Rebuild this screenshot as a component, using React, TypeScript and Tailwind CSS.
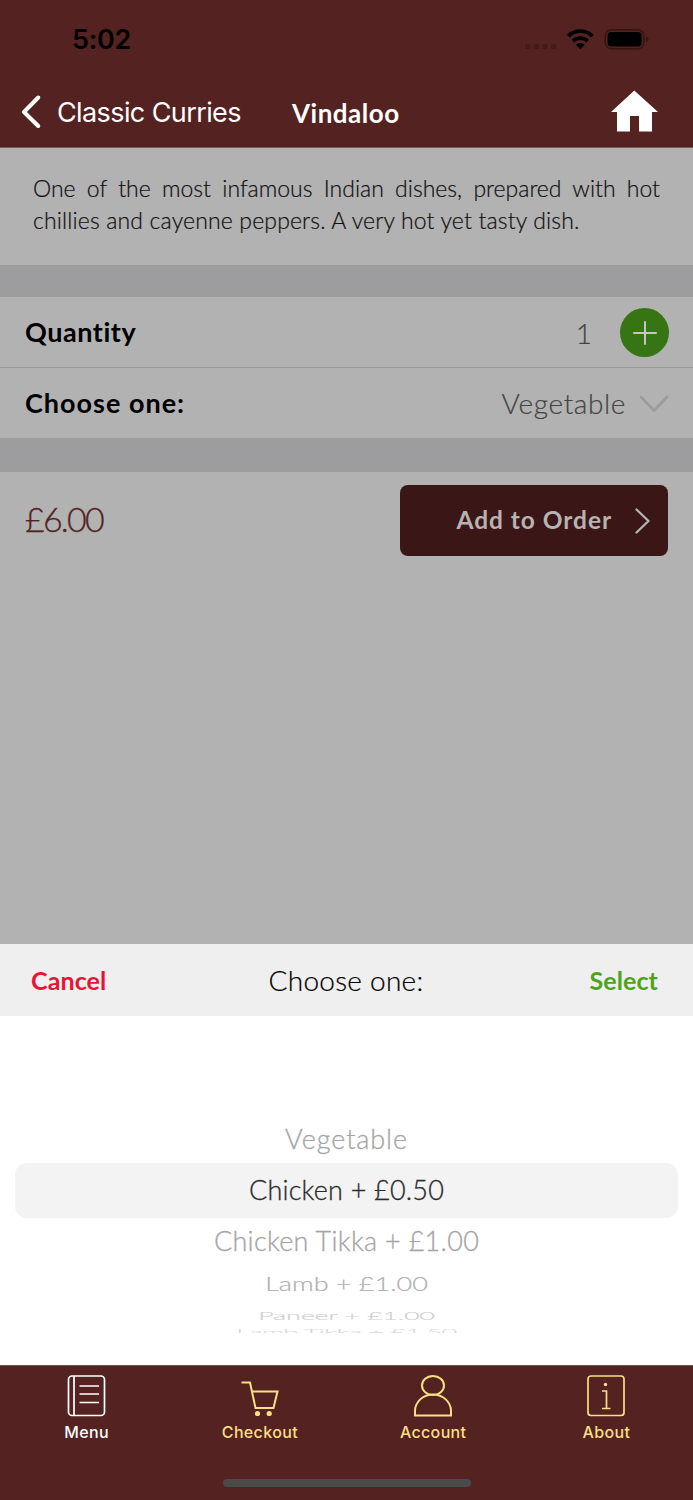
import React from 'react';

function StatusBar() {
  return (
    <div className="flex h-[76px] items-start justify-between pl-[72px] pr-[44px]">
      <span className="mt-[23px] font-[Inter] text-[27px] font-semibold leading-[34px] tracking-[-0.3px] text-black">5:02</span>
      <svg className="mt-[26px]" width="125" height="28" viewBox="524 26 125 28">
        <g fill="#431a1a">
          <rect x="525" y="44" width="5.4" height="5" rx="1.6" />
          <rect x="533.7" y="44" width="5.4" height="5" rx="1.6" />
          <rect x="542.3" y="44" width="5.4" height="5" rx="1.6" />
          <rect x="551" y="44" width="5.4" height="5" rx="1.6" />
        </g>
        <g fill="none" stroke="#000" strokeWidth="3.8">
          <path d="M568.2 36.1a17.2 17.2 0 0 1 24.2 0" />
          <path d="M572.9 41.1a10.6 10.6 0 0 1 14.8 0" />
        </g>
        <path d="M575.9 44.800a6.4 6.4 0 0 1 8.8 0l-4.4 4.4z" fill="#000" />
        <rect x="605.3" y="29.8" width="38.6" height="19" rx="6" fill="none" stroke="#37130f" strokeWidth="1.4" />
        <rect x="607.6" y="32" width="34" height="14.6" rx="3.6" fill="#000" />
        <path d="M646.2 36.6c3 1 3 4.600 0 5.600z" fill="#37130f" />
      </svg>
    </div>
  );
}

function NavBar() {
  return (
    <div className="flex h-[71px] items-center pl-[21px] pr-[35px]">
      <svg width="20" height="34" viewBox="0 0 20 34" fill="none" stroke="#fff" strokeWidth="4" strokeLinecap="round" strokeLinejoin="round">
        <path d="M17.200 2.500L3 17l14.200 14" />
      </svg>
      <span className="ml-[16px] w-[235px] whitespace-nowrap pt-[3px] font-[Inter] text-[27px] tracking-[-0.6px] text-white">Classic Curries</span>
      <span className="pt-[3px] text-[26px] font-bold tracking-[0.5px] text-white">Vindaloo</span>
      <svg className="mb-[2px] ml-auto" width="48" height="42" viewBox="0 0 48 42" fill="#fff">
        <path d="M24.300 0.500L48 22h-6v19.500H29V26h-9v15.500H7V22H1z" />
      </svg>
    </div>
  );
}

function TabItem({ label, color, children }: { label: string; color: string; children: React.ReactNode }) {
  return (
    <div className={`flex flex-1 flex-col items-center ${color}`}>
      <svg width="44" height="44" viewBox="0 0 44 44" fill="none" stroke="currentColor" strokeWidth="1.7">
        {children}
      </svg>
      <span className="mt-[4px] font-[Inter] text-[16px] font-medium leading-[20px] tracking-[0.35px]">{label}</span>
    </div>
  );
}

function TabBar() {
  return (
    <nav className="flex h-[135px] flex-col items-center border-t border-[#75514c] bg-[#532221]">
      <div className="flex h-[107px] w-full pt-[8px]">
        <TabItem label="Menu" color="text-white">
          <rect x="3.500" y="2" width="36" height="39.500" rx="3.500" />
          <path d="M9 2v39.500M14.500 12h19.500M14.500 20h19.500M14.500 28.500h19.500" />
        </TabItem>
        <TabItem label="Checkout" color="text-[#fbdf85]">
          <path d="M3.500 8.500h8.500L17.500 34h18l4-16.500H14" strokeWidth="2" />
          <circle cx="19.500" cy="39.500" r="2.600" fill="currentColor" stroke="none" />
          <circle cx="31.200" cy="39.500" r="2.600" fill="currentColor" stroke="none" />
        </TabItem>
        <TabItem label="Account" color="text-[#fbdf85]">
          <ellipse cx="22" cy="11.500" rx="11" ry="9.500" strokeWidth="2" />
          <path d="M4 41.500V37C4 28 12 20.500 22 20.500S40 28 40 37v4.500z" strokeWidth="2" />
        </TabItem>
        <TabItem label="About" color="text-[#fbdf85]">
          <rect x="4" y="2" width="36" height="39.500" rx="3" />
          <path d="M18 17h4.500v17.500M18 34.500h8.500" />
          <circle cx="21.500" cy="10.500" r="1.700" fill="currentColor" stroke="none" />
        </TabItem>
      </div>
      <div className="mt-[6px] h-[8px] w-[248px] rounded-full bg-[#4a4a4a]" />
    </nav>
  );
}

function Picker() {
  return (
    <section className="flex h-[421px] flex-col bg-white">
      <div className="grid h-[72px] grid-cols-3 items-center bg-[#efefef] pl-[31px] pr-[35px] text-[25px]">
        <span className="pt-[2px] font-bold tracking-[0.1px] text-[#e81435]">Cancel</span>
        <span className="whitespace-nowrap pl-[3px] text-center text-[28px] font-light tracking-[0.25px] text-black [-webkit-text-stroke:0.2px]">Choose one:</span>
        <span className="pt-[2px] text-right font-bold tracking-[0.1px] text-[#4fa31c]">Select</span>
      </div>
      <div className="flex flex-col items-stretch whitespace-nowrap px-[15px] pt-[98px] text-center text-[27px] font-light text-[#a5a5a5] [-webkit-text-stroke:0.3px]">
        <div className="h-[49px] leading-[50px] tracking-[0.9px]">Vegetable</div>
        <div className="h-[55px] rounded-xl bg-[#f3f3f3] leading-[54px] tracking-[0.2px] text-[#2b2b2b]">Chicken + £0.50</div>
        <div className="h-[46px] leading-[46px] tracking-[0.3px]">Chicken Tikka + £1.00</div>
        <div className="flex h-[39px] items-center justify-center text-[#b0b0b0]">
          <span className="inline-block scale-y-[0.76]">Lamb + £1.00</span>
        </div>
        <div className="flex h-[25px] items-center justify-center text-[#cfcfcf]">
          <span className="inline-block scale-y-[0.45] tracking-[-0.2px]">Paneer + £1.00</span>
        </div>
        <div className="flex h-[5px] items-center justify-center overflow-hidden text-[#d8d8d8]">
          <span className="inline-block translate-y-[2px] scale-y-[0.3] tracking-[-0.5px]">Lamb Tikka + £1.50</span>
        </div>
      </div>
    </section>
  );
}

export default function App() {
  return (
    <div className="flex h-[1500px] w-[693px] flex-col overflow-hidden bg-[#b2b2b2] font-[Lato,sans-serif]">
      <header className="h-[148px] border-b border-[#7b5d5b] bg-[#532221]">
        <StatusBar />
        <NavBar />
      </header>
      <main className="flex h-[796px] flex-col">
        <div className="h-[117px] px-[33px] pt-[25px] text-[23px] leading-[31.5px] text-[#101010] [-webkit-text-stroke:0.2px]">
          <p className="text-justify font-light [text-align-last:justify]">One of the most infamous Indian dishes, prepared with hot</p>
          <p className="whitespace-nowrap font-light tracking-[0.15px]">chillies and cayenne peppers. A very hot yet tasty dish.</p>
        </div>
        <div className="h-[32px] bg-[#9d9d9f]" />
        <div className="flex h-[71px] items-center border-b border-[#999999] pl-[25px] pr-[24px] pt-[1px]">
          <span className="text-[27px] font-bold tracking-[0.55px] text-black">Quantity</span>
          <span className="ml-auto text-[28px] font-light text-[#444] [-webkit-text-stroke:0.2px]">1</span>
          <div className="ml-[28px] flex size-[49px] items-center justify-center rounded-full bg-[#377514]">
            <svg width="24" height="24" viewBox="0 0 24 24" stroke="#c5c8c2" strokeWidth="2" strokeLinecap="round">
              <path d="M12 1v22M1 12h22" />
            </svg>
          </div>
        </div>
        <div className="flex h-[70px] items-center pl-[25px] pr-[24px]">
          <span className="text-[27px] font-bold tracking-[1px] text-black">Choose one:</span>
          <span className="ml-auto text-[28px] font-light tracking-[0.6px] text-[#444] [-webkit-text-stroke:0.2px]">Vegetable</span>
          <svg className="ml-[13px] mt-[2px]" width="30" height="18" viewBox="0 0 30 18" fill="none" stroke="#9c9c9f" strokeWidth="2.800" strokeLinecap="round" strokeLinejoin="round">
            <path d="M2 2l13 13.500L28 2" />
          </svg>
        </div>
        <div className="h-[34px] bg-[#9d9d9f]" />
        <div className="flex items-center justify-between px-[25px] pt-[13px]">
          <span className="pb-[4px] text-[34px] font-light tracking-[-1.8px] text-[#532221] [-webkit-text-stroke:0.3px]">£6.00</span>
          <button className="flex h-[71px] w-[268px] items-center justify-end rounded-lg bg-[#3a1716] pr-[18px] text-[24.500px] font-bold tracking-[0.95px] text-[#b8b2b2]">
            Add to Order
            <svg className="ml-[23px]" width="15" height="26" viewBox="0 0 15 26" fill="none" stroke="#b8b2b2" strokeWidth="2.300" strokeLinecap="round" strokeLinejoin="round">
              <path d="M1.500 1.500L13.500 13 1.500 24.500" />
            </svg>
          </button>
        </div>
      </main>
      <Picker />
      <TabBar />
    </div>
  );
}
